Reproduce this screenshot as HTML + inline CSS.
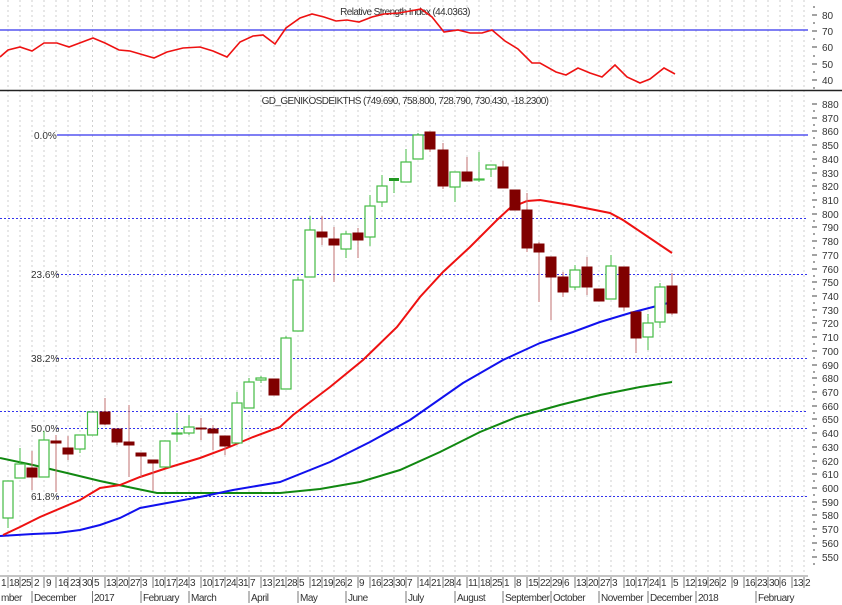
<!DOCTYPE html>
<html><head><meta charset="utf-8"><style>
html,body{margin:0;padding:0;background:#fff;width:842px;height:605px;overflow:hidden}
svg{display:block}
text{font-family:"Liberation Sans",sans-serif;font-size:10px;fill:#333}
.ax{font-size:10px;fill:#444}
.fib{fill:#5555ee;font-size:10px}
.g{fill:#fff;stroke:#44bb44;stroke-width:1.2}
.gw{stroke:#44bb44;stroke-width:1}
.r{fill:#800000;stroke:#800000;stroke-width:1}
.rw{stroke:#c07070;stroke-width:1}
</style></head><body>
<svg width="842" height="605" viewBox="0 0 842 605" xmlns="http://www.w3.org/2000/svg">
<!-- vertical gridlines -->
<g stroke="#cfcfcf" stroke-width="1" stroke-dasharray="2,3">
<path d="M8 0V575M20 0V575M32 0V575M44 0V575M56 0V575M68 0V575M80 0V575M92.5 0V575M105 0V575M117 0V575M129 0V575M141 0V575M153 0V575M165 0V575M177 0V575M189 0V575M201 0V575M213 0V575M225 0V575M237 0V575M249 0V575M261 0V575M274 0V575M286 0V575M298 0V575M310 0V575M322 0V575M334 0V575M346 0V575M358 0V575M370 0V575M382 0V575M394 0V575M406 0V575M418 0V575M430 0V575M443 0V575M455 0V575M467 0V575M479 0V575M491 0V575M503 0V575M515 0V575M527 0V575M539 0V575M551 0V575M563 0V575M575 0V575M587 0V575M599 0V575M611 0V575M624 0V575M636 0V575M648 0V575M660 0V575M672 0V575M684 0V575M696 0V575M708 0V575M720 0V575M732 0V575M744 0V575M756 0V575M768 0V575M780 0V575M792 0V575M804 0V575"/>
</g>
<!-- RSI panel -->
<line x1="0" y1="30" x2="808" y2="30" stroke="#3333ee" stroke-width="1.3"/>
<text x="405" y="15" text-anchor="middle" style="font-size:10px;letter-spacing:-0.6px">Relative Strength Index (44.0363)</text>
<polyline fill="none" stroke="#ee1111" stroke-width="1.6" points="0,57 8,50 20,47 32,51 44,43 57,43 69,47 93,38 105,43 119,50 130,51 154,58 167,52 183,48 200,47 213,51 227,57 240,42 253,36 263,35 275,44 286,28 300,18 312,14 324,17 336,21 347,20 359,22 372,17 384,14 399,13 410,11 421,9 432,17 444,32 458,30 470,33 482,33 492,30 505,41 518,49 532,63 540,63 556,72 566,75 578,68 590,73 602,77 615,65 627,77 640,83 650,79 664,68 675,74"/>
<line x1="0" y1="90.5" x2="842" y2="90.5" stroke="#222" stroke-width="1.5"/>
<g class="ax">
<text x="822" y="19">80</text><text x="822" y="35">70</text><text x="822" y="51">60</text><text x="822" y="68">50</text><text x="822" y="84">40</text>
</g>
<g stroke="#444" stroke-width="1">
<path d="M812 15h5M812 31h5M812 47h5M812 64h5M812 80h5M813 7h2M813 23h2M813 39h2M813 56h2M813 72h2M813 88h2"/>
</g>
<!-- price title -->
<text x="405" y="104" text-anchor="middle" style="font-size:10px;letter-spacing:-0.6px">GD_GENIKOSDEIKTHS (749.690, 758.800, 728.790, 730.430, -18.2300)</text>
<!-- fib lines -->
<line x1="57" y1="135" x2="808" y2="135" stroke="#3333ee" stroke-width="1.3"/>
<g stroke="#3333ee" stroke-width="1" stroke-dasharray="2,2">
<line x1="0" y1="218.5" x2="808" y2="218.5"/>
<line x1="57" y1="274.5" x2="808" y2="274.5"/>
<line x1="57" y1="358.5" x2="808" y2="358.5"/>
<line x1="0" y1="411.5" x2="808" y2="411.5"/>
<line x1="57" y1="428.5" x2="808" y2="428.5"/>
<line x1="57" y1="496.5" x2="808" y2="496.5"/>
</g>
<g class="fib">
<text x="34" y="139">0.0%</text><text x="31" y="278">23.6%</text><text x="31" y="362">38.2%</text><text x="31" y="432">50.0%</text><text x="31" y="500">61.8%</text>
</g>
<!-- price axis -->
<g class="ax">
<text x="822" y="108">880</text><text x="822" y="122">870</text><text x="822" y="135">860</text><text x="822" y="149">850</text><text x="822" y="163">840</text><text x="822" y="177">830</text><text x="822" y="190">820</text><text x="822" y="204">810</text><text x="822" y="218">800</text><text x="822" y="231">790</text><text x="822" y="245">780</text><text x="822" y="259">770</text><text x="822" y="273">760</text><text x="822" y="286">750</text><text x="822" y="300">740</text><text x="822" y="314">730</text><text x="822" y="327">720</text><text x="822" y="341">710</text><text x="822" y="355">700</text><text x="822" y="369">690</text><text x="822" y="382">680</text><text x="822" y="396">670</text><text x="822" y="410">660</text><text x="822" y="423">650</text><text x="822" y="437">640</text><text x="822" y="451">630</text><text x="822" y="465">620</text><text x="822" y="478">610</text><text x="822" y="492">600</text><text x="822" y="506">590</text><text x="822" y="519">580</text><text x="822" y="533">570</text><text x="822" y="547">560</text><text x="822" y="561">550</text>
</g>
<g stroke="#444" stroke-width="1">
<path d="M812 104h5M812 118h5M812 131h5M812 145h5M812 159h5M812 173h5M812 186h5M812 200h5M812 214h5M812 227h5M812 241h5M812 255h5M812 269h5M812 282h5M812 296h5M812 310h5M812 323h5M812 337h5M812 351h5M812 365h5M812 378h5M812 392h5M812 406h5M812 419h5M812 433h5M812 447h5M812 461h5M812 474h5M812 488h5M812 502h5M812 515h5M812 529h5M812 543h5M812 557h5"/>
<path d="M813 111h2M813 125h2M813 138h2M813 152h2M813 166h2M813 180h2M813 193h2M813 207h2M813 221h2M813 234h2M813 248h2M813 262h2M813 276h2M813 289h2M813 303h2M813 317h2M813 330h2M813 344h2M813 358h2M813 372h2M813 385h2M813 399h2M813 413h2M813 426h2M813 440h2M813 454h2M813 468h2M813 481h2M813 495h2M813 509h2M813 522h2M813 536h2M813 550h2M813 564h2"/>
</g>
<!-- moving averages -->
<polyline fill="none" stroke="#118811" stroke-width="2" points="0,458 33,465 67,473 100,481 133,488 157,493 200,493 260,493 280,493 320,489 360,482 400,470 440,452 480,432 517,417 560,405 600,395 640,387 672,382"/>
<polyline fill="none" stroke="#1111ee" stroke-width="2" points="0,536 33,534 57,533 80,530 100,525 120,518 140,508 167,503 200,497 233,490 280,482 330,462 370,442 410,420 463,383 503,360 540,343 573,332 600,322 630,313 672,302"/>
<polyline fill="none" stroke="#ee1111" stroke-width="2" points="3,535 20,527 40,517 80,500 100,488 120,485 140,477 167,468 200,458 227,448 253,437 280,427 293,415 330,387 363,360 397,327 420,297 443,272 470,247 497,220 510,208 527,201 540,200 570,205 610,213 623,220 672,253"/>
<!-- candles: wicks -->
<g class="gw">
<path d="M8 518V528M20 448V464M44 431V440M80 449V453M165 441V441M177 413V442M189 415V435M237 392V403M249 378V382M261 376V383M286 336V338M298 277V280M310 216V230M346 231V258M370 195V246M382 175V207M394 181V193M406 149V162M418 133V135M455 187V202M479 152V182M491 165V177M575 265V290M611 255V266M648 314V350M660 283V328"/>
</g>
<g class="rw">
<path d="M32 451V490M56 435V492M68 436V460M105 398V425M117 442V445M129 405V477M141 456V477M153 463V491M201 418V440M213 425V450M225 446V455M322 216V245M334 227V282M358 228V258M430 149V152M443 143V189M467 157V172M503 161V167M527 193V252M539 242V302M551 277V320M563 272V297M587 257V295M624 307V311M636 338V353M672 273V315"/>
</g>
<!-- bodies -->
<g class="g">
<rect x="3" y="481" width="10" height="37"/><rect x="15" y="464" width="10" height="14"/><rect x="39" y="440" width="10" height="37"/><rect x="75" y="435" width="10" height="14"/><rect x="87.5" y="412" width="10" height="23"/><rect x="160" y="441" width="10" height="26"/><rect x="172" y="433" width="10" height="1"/><rect x="184" y="427" width="10" height="6"/><rect x="232" y="403" width="10" height="40"/><rect x="244" y="382" width="10" height="26"/><rect x="256" y="378" width="10" height="2"/><rect x="281" y="338" width="10" height="51"/><rect x="293" y="280" width="10" height="51"/><rect x="305" y="230" width="10" height="47"/><rect x="341" y="234" width="10" height="15"/><rect x="365" y="206" width="10" height="31"/><rect x="377" y="186" width="10" height="16"/><rect x="401" y="162" width="10" height="20"/><rect x="413" y="135" width="10" height="24"/><rect x="450" y="172" width="10" height="15"/><rect x="474" y="179" width="10" height="1"/><rect x="486" y="165" width="10" height="4"/><rect x="570" y="270" width="10" height="17"/><rect x="606" y="266" width="10" height="33"/><rect x="643" y="323" width="10" height="14"/><rect x="655" y="287" width="10" height="35"/>
</g>
<rect x="389" y="178" width="10" height="3" fill="#229922"/>
<g class="r">
<rect x="27" y="468" width="10" height="9"/><rect x="51" y="441" width="10" height="2"/><rect x="63" y="448" width="10" height="6"/><rect x="100" y="412" width="10" height="12"/><rect x="112" y="429" width="10" height="13"/><rect x="124" y="442" width="10" height="3"/><rect x="136" y="453" width="10" height="3"/><rect x="148" y="460" width="10" height="3"/><rect x="196" y="428" width="10" height="1"/><rect x="208" y="429" width="10" height="4"/><rect x="220" y="436" width="10" height="10"/><rect x="269" y="379" width="10" height="16"/><rect x="317" y="232" width="10" height="5"/><rect x="329" y="239" width="10" height="6"/><rect x="353" y="233" width="10" height="7"/><rect x="425" y="132" width="10" height="17"/><rect x="438" y="150" width="10" height="36"/><rect x="462" y="172" width="10" height="9"/><rect x="498" y="167" width="10" height="21"/><rect x="510" y="190" width="10" height="20"/><rect x="522" y="210" width="10" height="38"/><rect x="534" y="244" width="10" height="8"/><rect x="546" y="257" width="10" height="20"/><rect x="558" y="277" width="10" height="15"/><rect x="582" y="267" width="10" height="20"/><rect x="594" y="289" width="10" height="12"/><rect x="619" y="267" width="10" height="40"/><rect x="631" y="312" width="10" height="26"/><rect x="667" y="286" width="10" height="27"/>
</g>
<!-- bottom axis -->
<line x1="0" y1="576" x2="808" y2="576" stroke="#888" stroke-width="1"/>
<g stroke="#777" stroke-width="1">
<path d="M8 577V588M20 577V588M32 577V588M44 577V588M56 577V588M68 577V588M80 577V588M92.5 577V588M105 577V588M117 577V588M129 577V588M141 577V588M153 577V588M165 577V588M177 577V588M189 577V588M201 577V588M213 577V588M225 577V588M237 577V588M249 577V588M261 577V588M274 577V588M286 577V588M298 577V588M310 577V588M322 577V588M334 577V588M346 577V588M358 577V588M370 577V588M382 577V588M394 577V588M406 577V588M418 577V588M430 577V588M443 577V588M455 577V588M467 577V588M479 577V588M491 577V588M503 577V588M515 577V588M527 577V588M539 577V588M551 577V588M563 577V588M575 577V588M587 577V588M599 577V588M611 577V588M624 577V588M636 577V588M648 577V588M660 577V588M672 577V588M684 577V588M696 577V588M708 577V588M720 577V588M732 577V588M744 577V588M756 577V588M768 577V588M780 577V588M792 577V588M804 577V588"/>
<path d="M32 591V603M92.5 591V603M141 591V603M189 591V603M249 591V603M298 591V603M346 591V603M406 591V603M455 591V603M503 591V603M551 591V603M599 591V603M648 591V603M696 591V603M756 591V603"/>
</g>
<g style="font-size:9.5px;letter-spacing:-0.5px;fill:#333">
<text x="1" y="586">1</text><text x="9" y="586">18</text><text x="21" y="586">25</text><text x="34" y="586">2</text><text x="46" y="586">9</text><text x="58" y="586">16</text><text x="70" y="586">23</text><text x="82" y="586">30</text><text x="94" y="586">5</text><text x="106" y="586">13</text><text x="118" y="586">20</text><text x="130" y="586">27</text><text x="142" y="586">3</text><text x="154" y="586">10</text><text x="166" y="586">17</text><text x="178" y="586">24</text><text x="190" y="586">3</text><text x="202" y="586">10</text><text x="214" y="586">17</text><text x="226" y="586">24</text><text x="238" y="586">31</text><text x="250" y="586">7</text><text x="262" y="586">13</text><text x="275" y="586">21</text><text x="287" y="586">28</text><text x="299" y="586">5</text><text x="311" y="586">12</text><text x="323" y="586">19</text><text x="335" y="586">26</text><text x="347" y="586">2</text><text x="359" y="586">9</text><text x="371" y="586">16</text><text x="383" y="586">23</text><text x="395" y="586">30</text><text x="407" y="586">7</text><text x="419" y="586">14</text><text x="431" y="586">21</text><text x="444" y="586">28</text><text x="456" y="586">4</text><text x="468" y="586">11</text><text x="480" y="586">18</text><text x="492" y="586">25</text><text x="504" y="586">1</text><text x="516" y="586">8</text><text x="528" y="586">15</text><text x="540" y="586">22</text><text x="552" y="586">29</text><text x="564" y="586">6</text><text x="576" y="586">13</text><text x="588" y="586">20</text><text x="600" y="586">27</text><text x="612" y="586">3</text><text x="625" y="586">10</text><text x="637" y="586">17</text><text x="649" y="586">24</text><text x="661" y="586">1</text><text x="673" y="586">5</text><text x="685" y="586">12</text><text x="697" y="586">19</text><text x="709" y="586">26</text><text x="721" y="586">2</text><text x="733" y="586">9</text><text x="745" y="586">16</text><text x="757" y="586">23</text><text x="769" y="586">30</text><text x="781" y="586">6</text><text x="793" y="586">13</text><text x="805" y="586">2</text>
<text x="1" y="601">mber</text><text x="34" y="601">December</text><text x="94" y="601">2017</text><text x="143" y="601">February</text><text x="191" y="601">March</text><text x="251" y="601">April</text><text x="300" y="601">May</text><text x="348" y="601">June</text><text x="408" y="601">July</text><text x="457" y="601">August</text><text x="505" y="601">September</text><text x="553" y="601">October</text><text x="601" y="601">November</text><text x="650" y="601">December</text><text x="698" y="601">2018</text><text x="758" y="601">February</text>
</g>
</svg>
</body></html>
